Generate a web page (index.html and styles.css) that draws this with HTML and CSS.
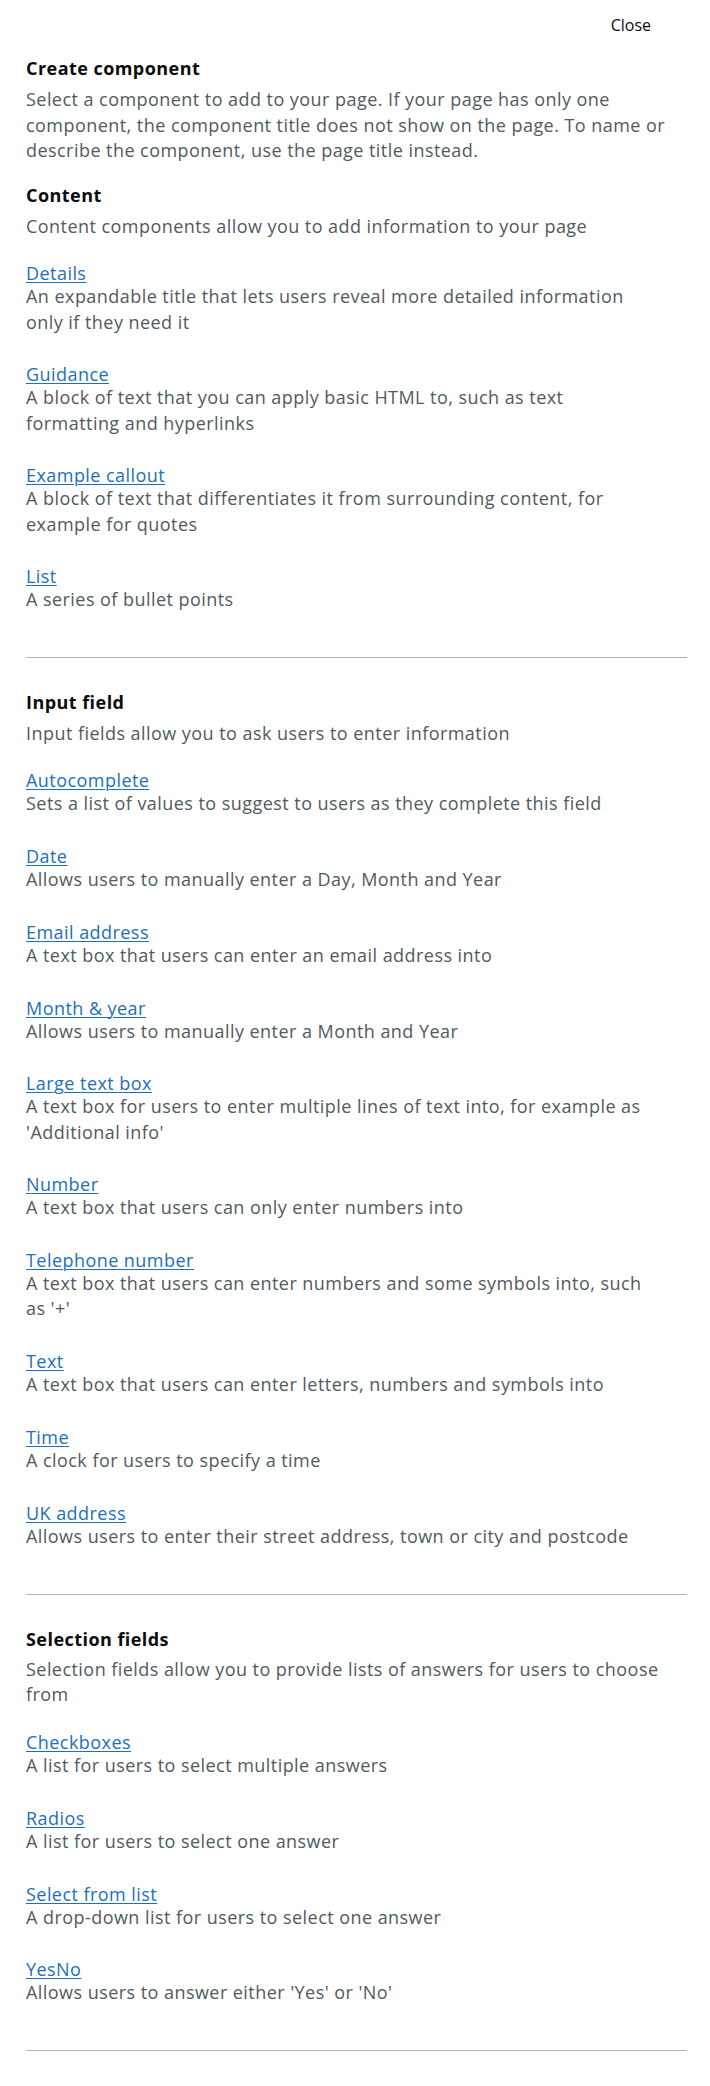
FILE: index.html
```html
<!DOCTYPE html>
<html lang="en">
<head>
<meta charset="utf-8">
<title>Create component</title>
<link rel="stylesheet" href="styles.css">
</head>
<body>
<div class="close-row"><a class="close" href="#">Close</a></div>
<main class="panel">
  <h1 class="title">Create component</h1>
  <p class="intro">Select a component to add to your page. If your page has only one component, the component title does not show on the page. To name or describe the component, use the page title instead.</p>

  <section class="group first">
    <h2 class="heading">Content</h2>
    <p class="lead">Content components allow you to add information to your page</p>
    <ul class="items">
      <li class="item"><a class="link" href="#">Details</a><p class="desc">An expandable title that lets users reveal more detailed information only if they need it</p></li>
      <li class="item"><a class="link" href="#">Guidance</a><p class="desc">A block of text that you can apply basic HTML to, such as text formatting and hyperlinks</p></li>
      <li class="item"><a class="link" href="#">Example callout</a><p class="desc">A block of text that differentiates it from surrounding content, for example for quotes</p></li>
      <li class="item"><a class="link" href="#">List</a><p class="desc">A series of bullet points</p></li>
    </ul>
  </section>

  <section class="group">
    <h2 class="heading">Input field</h2>
    <p class="lead">Input fields allow you to ask users to enter information</p>
    <ul class="items">
      <li class="item"><a class="link" href="#">Autocomplete</a><p class="desc">Sets a list of values to suggest to users as they complete this field</p></li>
      <li class="item"><a class="link" href="#">Date</a><p class="desc">Allows users to manually enter a Day, Month and Year</p></li>
      <li class="item"><a class="link" href="#">Email address</a><p class="desc">A text box that users can enter an email address into</p></li>
      <li class="item"><a class="link" href="#">Month &amp; year</a><p class="desc">Allows users to manually enter a Month and Year</p></li>
      <li class="item"><a class="link" href="#">Large text box</a><p class="desc">A text box for users to enter multiple lines of text into, for example as 'Additional info'</p></li>
      <li class="item"><a class="link" href="#">Number</a><p class="desc">A text box that users can only enter numbers into</p></li>
      <li class="item"><a class="link" href="#">Telephone number</a><p class="desc">A text box that users can enter numbers and some symbols into, such as '+'</p></li>
      <li class="item"><a class="link" href="#">Text</a><p class="desc">A text box that users can enter letters, numbers and symbols into</p></li>
      <li class="item"><a class="link" href="#">Time</a><p class="desc">A clock for users to specify a time</p></li>
      <li class="item"><a class="link" href="#">UK address</a><p class="desc">Allows users to enter their street address, town or city and postcode</p></li>
    </ul>
  </section>

  <section class="group">
    <h2 class="heading">Selection fields</h2>
    <p class="lead">Selection fields allow you to provide lists of answers for users to choose from</p>
    <ul class="items">
      <li class="item"><a class="link" href="#">Checkboxes</a><p class="desc">A list for users to select multiple answers</p></li>
      <li class="item"><a class="link" href="#">Radios</a><p class="desc">A list for users to select one answer</p></li>
      <li class="item"><a class="link" href="#">Select from list</a><p class="desc">A drop-down list for users to select one answer</p></li>
      <li class="item"><a class="link" href="#">YesNo</a><p class="desc">Allows users to answer either 'Yes' or 'No'</p></li>
    </ul>
  </section>
</main>
</body>
</html>
```

FILE: styles.css
```css
html, body {
  margin: 0;
  padding: 0;
  background: #ffffff;
}

body {
  font-family: "Open Sans", "Noto Sans", "Liberation Sans", sans-serif;
  color: #0b0c0c;
  -webkit-font-smoothing: antialiased;
}

.close-row {
  display: flex;
  justify-content: flex-end;
  padding: 13px 59px 0 0;
}

.close {
  font-size: 16px;
  line-height: 24px;
  color: #0b0c0c;
  text-decoration: none;
}

.panel {
  padding: 0 23px 0 26px;
}

.title,
.heading,
.intro,
.lead,
.link,
.desc {
  font-size: 18px;
  letter-spacing: 0.45px;
}

.title,
.heading {
  margin: 0;
  font-weight: 700;
  line-height: 25.2px;
  color: #0b0c0c;
}

.title {
  margin-top: 19.4px;
}

.intro {
  margin: 5.8px 0 0;
  line-height: 25.2px;
  color: #505a5f;
}

.group {
  border-bottom: 1px solid #b1b4b6;
  padding: 31.8px 0 44.7px;
}

.group.first {
  padding-top: 20px;
}

.lead {
  margin: 5.4px 0 0;
  line-height: 25.2px;
  color: #505a5f;
}

.items {
  list-style: none;
  margin: 23.5px 0 0;
  padding: 0;
  display: flex;
  flex-direction: column;
  gap: 28.6px;
}

.item {
  margin: 0;
  padding: 0;
}

.link {
  display: block;
  width: max-content;
  line-height: 22px;
  color: #1d70b8;
  text-decoration: underline;
  text-decoration-thickness: 1px;
  text-underline-offset: 2px;
}

.desc {
  margin: 0;
  max-width: 625px;
  line-height: 25.2px;
  color: #505a5f;
}
```
